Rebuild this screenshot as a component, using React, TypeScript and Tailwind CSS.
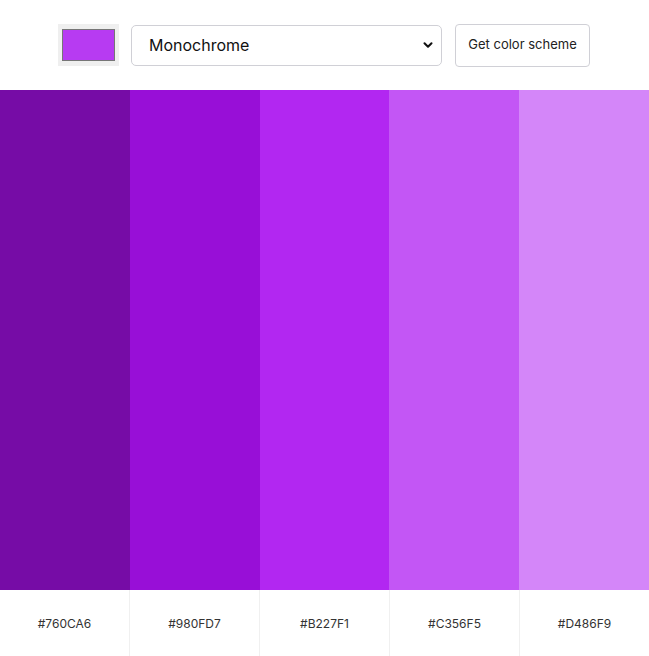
import { ChevronDown } from "lucide-react";

const scheme = ["#760CA6", "#980FD7", "#B227F1", "#C356F5", "#D486F9"];

export default function App() {
  return (
    <div className="flex h-[656px] w-[649px] flex-col bg-white font-['Inter',sans-serif] text-[#222]">
      <header className="flex h-[90px] items-center justify-center gap-3 pr-[1px]">
        <div className="flex h-[42px] w-[61px] items-center justify-center bg-[#efefef]">
          <div className="h-[32px] w-[53px] border border-[#767676] bg-[#b73bf2]" />
        </div>
        <div className="flex h-[41px] w-[311px] items-center justify-between rounded-[5px] border border-[#d0d0d6] bg-white pl-[17px] pr-[6px] text-[16px] text-[#111]">
          <span>Monochrome</span>
          <ChevronDown size={14} strokeWidth={3.5} color="#111" />
        </div>
        <button className="ml-[1px] h-[43px] w-[135px] rounded-[4px] border border-[#d0d0d6] bg-white text-[13px] text-[#222]">
          Get color scheme
        </button>
      </header>
      <div className="flex h-[500px]">
        {scheme.map((c) => (
          <div key={c} className="flex-1" style={{ backgroundColor: c }} />
        ))}
      </div>
      <div className="flex flex-1">
        {scheme.map((c, i) => (
          <div
            key={c}
            className={`flex flex-1 items-center justify-center pt-[1px] text-[12px] text-[#333] ${i > 0 ? "border-l border-[#f0f0f0]" : ""}`}
          >
            {c}
          </div>
        ))}
      </div>
    </div>
  );
}
